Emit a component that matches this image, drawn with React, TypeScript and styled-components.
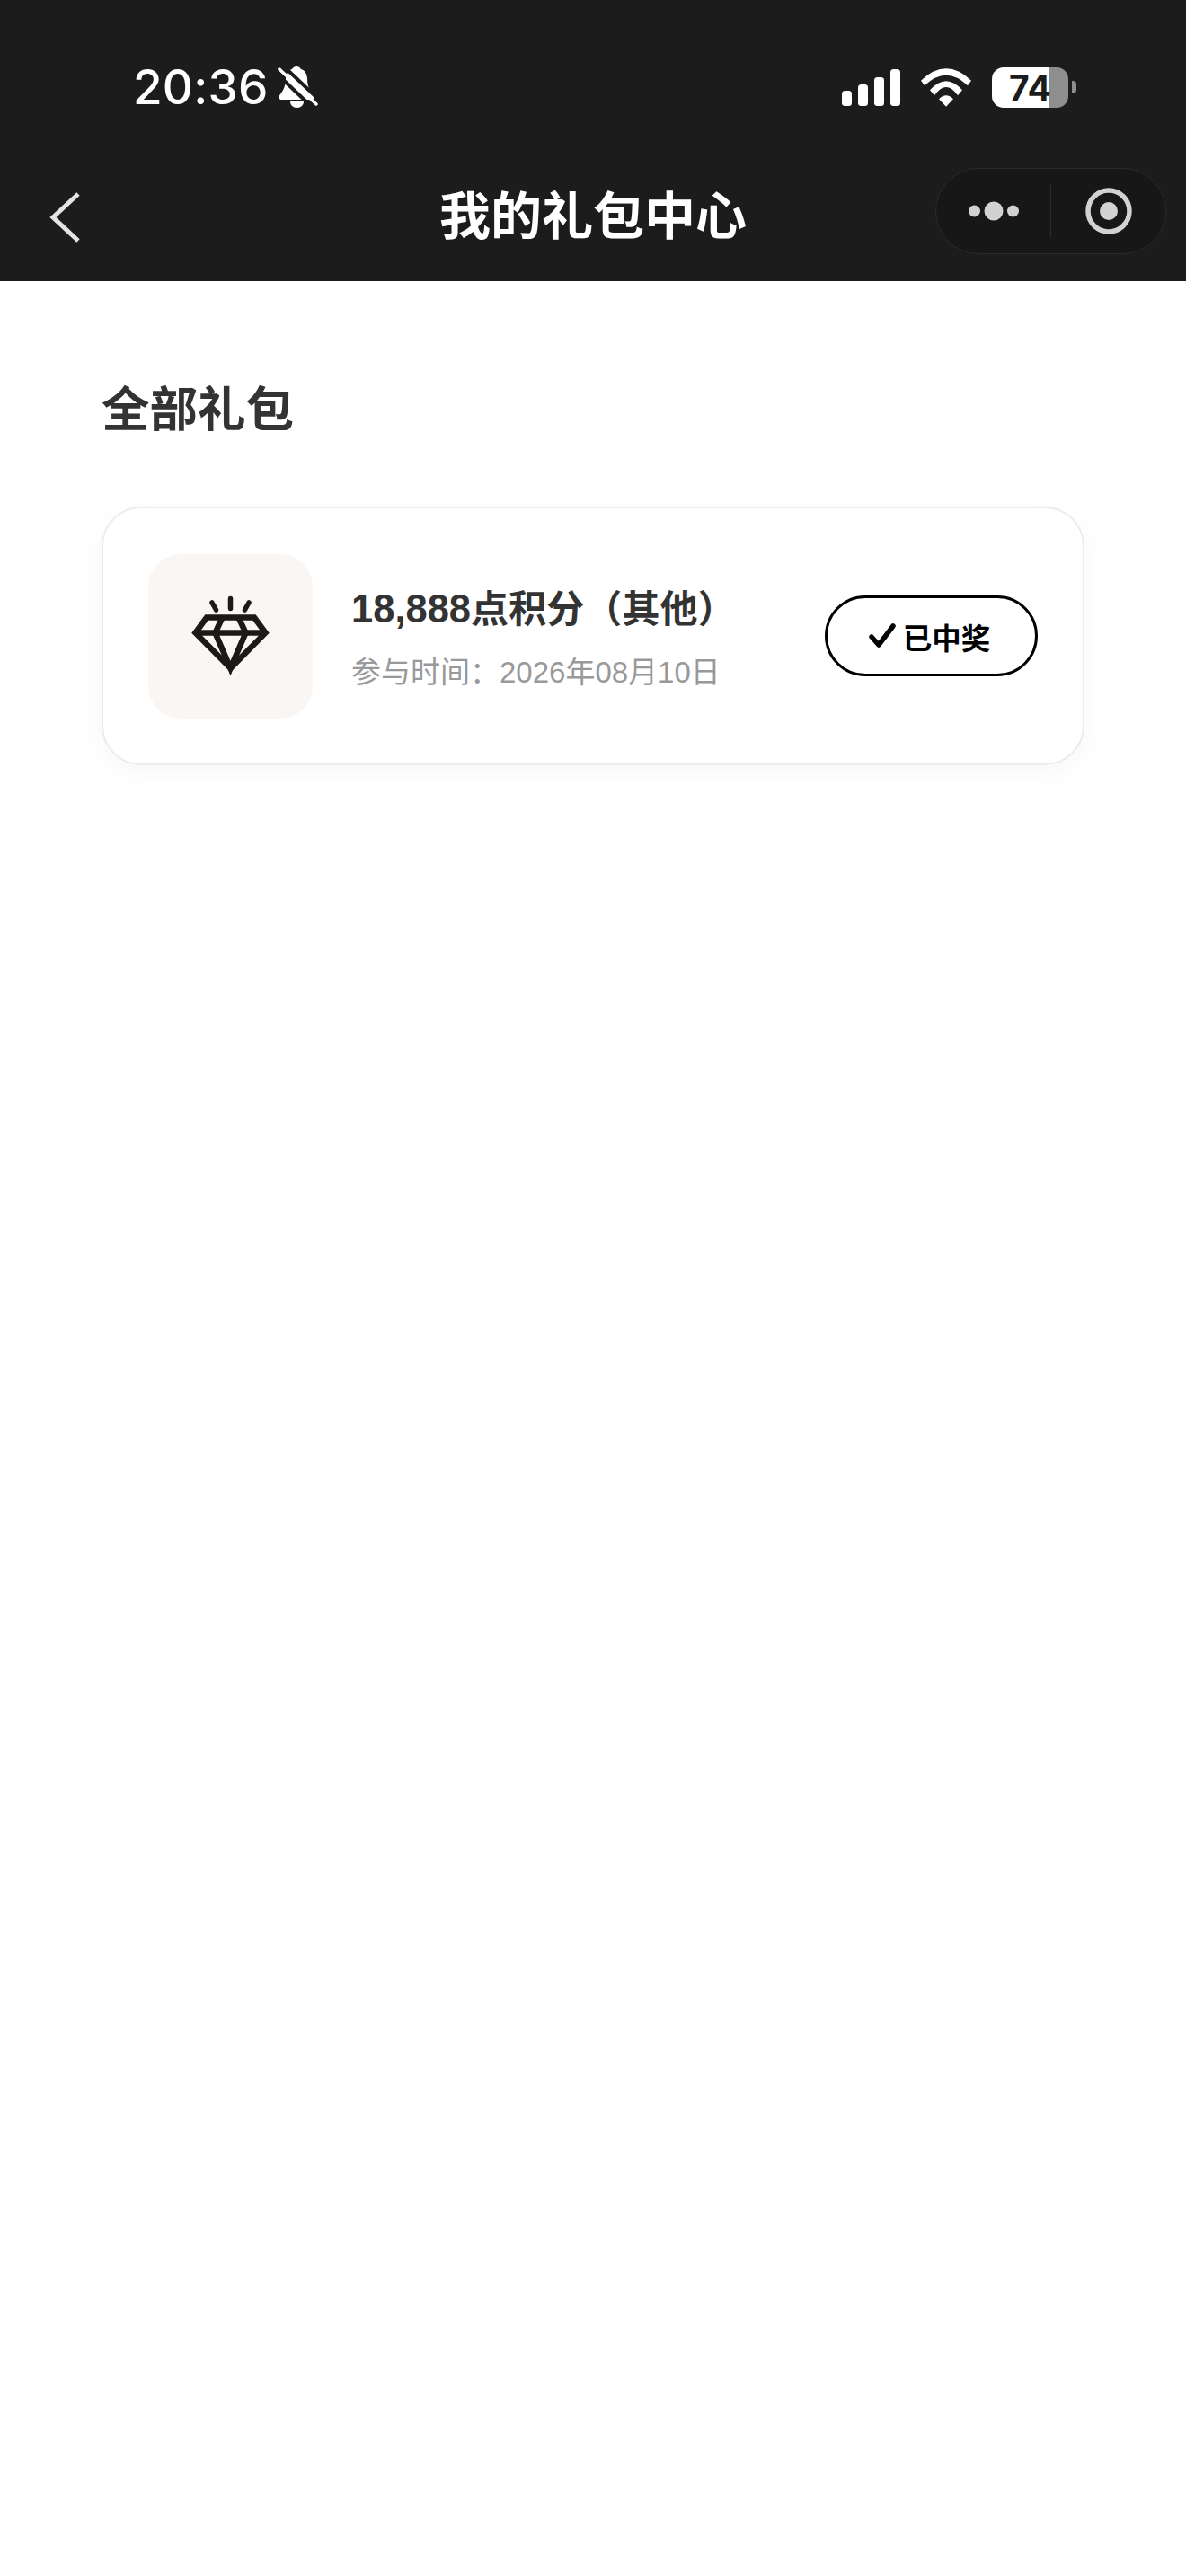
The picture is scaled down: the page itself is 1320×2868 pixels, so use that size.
import React from "react";
import styled, { createGlobalStyle } from "styled-components";

const Global = createGlobalStyle`
  html, body { margin: 0; padding: 0; background: #fff; }
  * { box-sizing: border-box; }
`;

const CJK = `"Liberation Sans", "Noto Sans CJK SC", sans-serif`;

const Page = styled.div`
  width: 1320px;
  min-height: 2868px;
  background: #fff;
  font-family: ${CJK};
`;
const Header = styled.header`
  height: 313px;
  background: #1c1c1c;
  color: #fff;
`;
const StatusBar = styled.div`
  height: 170px;
  padding: 24px 122px 0 148px;
  display: flex;
  align-items: center;
  justify-content: space-between;
`;
const Left = styled.div`
  display: flex;
  align-items: center;
  gap: 9px;
`;
const Time = styled.span`
  font-family: Inter, sans-serif;
  font-size: 53px;
  font-weight: 500;
  line-height: 1;
  letter-spacing: 0.2px;
`;
const Right = styled.div`
  display: flex;
  align-items: center;
  gap: 22px;
`;
const Battery = styled.div`
  position: relative;
  width: 85px;
  height: 45px;
  border-radius: 13px;
  overflow: hidden;
  background: linear-gradient(90deg, #fff 0 63px, #8e8e8e 63px);
  color: #1c1c1c;
  display: flex;
  align-items: center;
  justify-content: center;
  font-family: Inter, sans-serif;
  font-size: 39px;
  font-weight: 700;
  line-height: 1;
`;
const BatteryWrap = styled.div`
  display: flex;
  align-items: center;
  gap: 4px;
`;
const Nub = styled.div`
  width: 5px;
  height: 14px;
  border-radius: 0 4px 4px 0;
  background: #8e8e8e;
`;
const Nav = styled.nav`
  height: 143px;
  padding: 0 22px;
  display: grid;
  grid-template-columns: 1fr auto 1fr;
  align-items: center;
`;
const Title = styled.h1`
  margin: 0;
  font-size: 57px;
  font-weight: 700;
  line-height: 1.2;
  color: #fff;
`;
const Back = styled.svg`
  display: block;
  width: 36px;
  height: 58px;
  margin-left: 32px;
`;
const Capsule = styled.div`
  justify-self: end;
  align-self: start;
  margin-top: 17px;
  width: 257px;
  height: 96px;
  border-radius: 48px;
  background: #171717;
  border: 1px solid #2a2a2a;
  display: grid;
  grid-template-columns: 1fr 1px 1fr;
  align-items: center;
  justify-items: center;
`;
const Divider = styled.div`
  width: 1px;
  height: 60px;
  background: #2c2c2c;
`;
const Main = styled.main`
  padding: 0 113px;
`;
const SectionTitle = styled.h2`
  margin: 0;
  padding-top: 112px;
  font-size: 53.500px;
  font-weight: 700;
  line-height: 64px;
  color: #333;
`;
const Card = styled.section`
  margin-top: 75px;
  width: 1094px;
  height: 288px;
  border: 2px solid #ececec;
  border-radius: 44px;
  background: #fff;
  box-shadow: 0 8px 28px rgba(0, 0, 0, 0.035);
  padding: 0 50px;
  display: flex;
  align-items: center;
`;
const Thumb = styled.div`
  flex: none;
  width: 183px;
  height: 183px;
  border-radius: 36px;
  background: #f9f6f3;
  display: flex;
  align-items: center;
  justify-content: center;
`;
const Info = styled.div`
  flex: 1;
  margin-left: 43px;
  margin-top: 5px;
  display: flex;
  flex-direction: column;
  gap: 25px;
`;
const ItemName = styled.div`
  font-size: 42px;
  font-weight: 700;
  line-height: 50px;
  letter-spacing: 0.1px;
  color: #333;
  white-space: nowrap;
`;
const Amount = styled.span`
  font-size: 43.500px;
  letter-spacing: 0;
`;
const ItemDate = styled.div`
  font-size: 33px;
  line-height: 40px;
  color: #999;
  white-space: nowrap;
`;
const Badge = styled.div`
  flex: none;
  width: 237px;
  height: 90px;
  padding-right: 4px;
  border: 3px solid #000;
  border-radius: 45px;
  display: flex;
  align-items: center;
  justify-content: center;
  gap: 8px;
  font-size: 32.500px;
  font-weight: 700;
  color: #000;
`;

export default function App() {
  return (
    <Page>
      <Global />
      <Header>
        <StatusBar>
          <Left>
            <Time>20:36</Time>
            <svg width="46" height="50" viewBox="8 8 46 50" fill="#fff">
              <path d="M30 10c-2 0-4 1-5 3-4 1-7 5-7 11 0 8-3 13-6 17-2 2-2 6 1 6h34c3 0 3-4 1-6-3-4-6-9-6-17 0-6-3-10-7-11-1-2-3-3-5-3z" />
              <path d="M23 49h15c0 4-3 7-7.500 7s-7.500-3-7.500-7z" />
              <path d="M15 9 L56 48" stroke="#1c1c1c" strokeWidth="4" />
              <path d="M7 17 L48 56" stroke="#1c1c1c" strokeWidth="4" />
              <path d="M11 13 L52 52" stroke="#fff" strokeWidth="3.500" strokeLinecap="round" />
            </svg>
          </Left>
          <Right>
            <svg width="65" height="41" viewBox="0 0 65 41" fill="#fff">
              <rect x="0" y="24" width="11" height="17" rx="3.500" />
              <rect x="18" y="17" width="11" height="24" rx="3.500" />
              <rect x="36" y="9" width="11" height="32" rx="3.500" />
              <rect x="54" y="0" width="11" height="41" rx="3.500" />
            </svg>
            <svg width="58" height="43" viewBox="0 0 58 43" fill="#fff">
              <path d="M1 13.700 Q29 -13.100 57 13.700 L53 19.300 Q29 -3.900 5 19.300 Z" />
              <path d="M11 24.300 Q29 4.300 47 24.300 L42 30.300 Q29 11.700 16 30.300 Z" />
              <path d="M21 34.300 Q29 26.300 37 34.300 L29 42.700 Z" />
            </svg>
            <BatteryWrap>
              <Battery>74</Battery>
              <Nub />
            </BatteryWrap>
          </Right>
        </StatusBar>
        <Nav>
          <Back viewBox="0 0 36 58" fill="none" stroke="#e4e4e4" strokeWidth="5">
            <path d="M33 3 L5 29 L33 55" />
          </Back>
          <Title>我的礼包中心</Title>
          <Capsule>
            <svg width="56" height="24" viewBox="0 0 56 24" fill="#d2d2d2">
              <circle cx="6.500" cy="12" r="6.500" />
              <circle cx="28" cy="12" r="10.500" />
              <circle cx="49.500" cy="12" r="6.500" />
            </svg>
            <Divider />
            <svg width="52" height="52" viewBox="0 0 52 52">
              <circle cx="26" cy="26" r="23" fill="none" stroke="#d2d2d2" strokeWidth="5.500" />
              <circle cx="26" cy="26" r="10" fill="#d2d2d2" />
            </svg>
          </Capsule>
        </Nav>
      </Header>
      <Main>
        <SectionTitle>全部礼包</SectionTitle>
        <Card>
          <Thumb>
            <svg width="110" height="110" viewBox="1.500 3.500 110 110" fill="none" stroke="#1c1a18" strokeWidth="6.500" strokeLinejoin="miter">
              <path d="M29.500 38 H82.500 L95 55 L56 94.500 L17 55 Z" />
              <path d="M17 55 H95" />
              <path d="M47 38 L39 55 L56 94.500 L73 55 L65 38" />
              <path d="M56 17 V28 M35.500 21.500 L40 29.500 M76.500 21.500 L72 29.500" strokeWidth="5.500" strokeLinecap="round" />
            </svg>
          </Thumb>
          <Info>
            <ItemName><Amount>18,888</Amount>点积分（其他）</ItemName>
            <ItemDate>参与时间：2026年08月10日</ItemDate>
          </Info>
          <Badge>
            <svg width="30" height="28" viewBox="0 0 30 28" fill="none" stroke="#000" strokeWidth="5.500" strokeLinecap="round" strokeLinejoin="round">
              <path d="M3 15 L11 24 L27 3" />
            </svg>
            已中奖
          </Badge>
        </Card>
      </Main>
    </Page>
  );
}
